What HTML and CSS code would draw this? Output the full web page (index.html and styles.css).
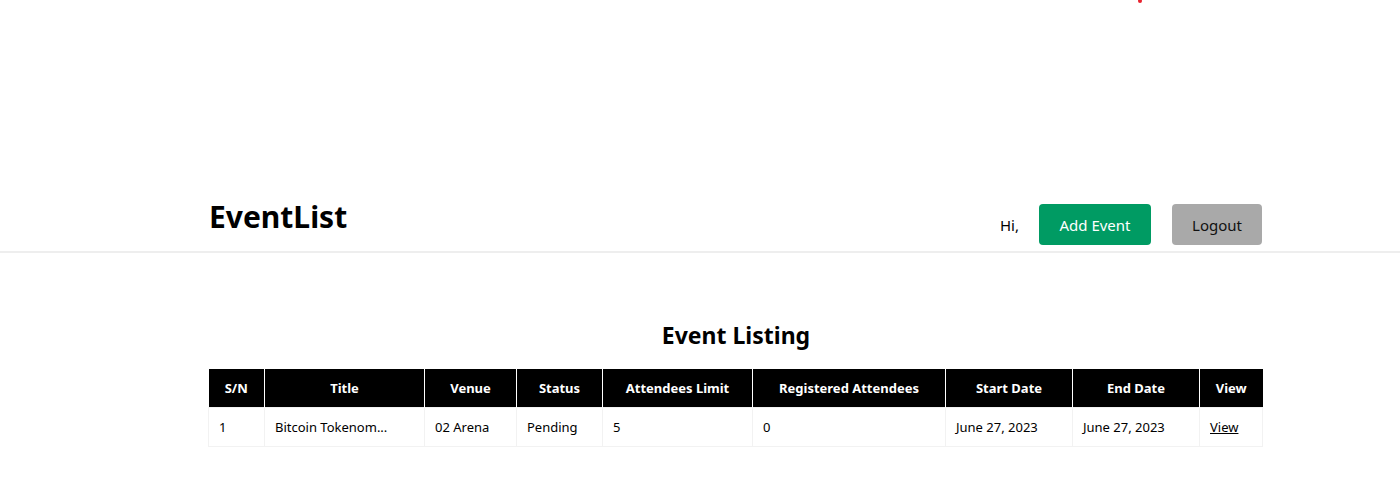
FILE: index.html
```html
<!DOCTYPE html>
<html>
<head>
<meta charset="utf-8">
<link rel="stylesheet" href="styles.css">
</head>
<body>
<span class="dot"></span>
<header class="topbar">
  <div class="container bar">
    <h1 class="brand">EventList</h1>
    <div class="actions">
      <span class="hi">Hi,</span>
      <button class="btn btn-add">Add Event</button>
      <button class="btn btn-logout">Logout</button>
    </div>
  </div>
</header>
<main class="container">
  <h2 class="title">Event Listing</h2>
  <table class="events">
    <colgroup>
      <col style="width:56px"><col style="width:160px"><col style="width:92px"><col style="width:86px"><col style="width:150px"><col style="width:193px"><col style="width:127px"><col style="width:127px"><col style="width:63px">
    </colgroup>
    <thead>
      <tr><th>S/N</th><th>Title</th><th>Venue</th><th>Status</th><th>Attendees Limit</th><th>Registered Attendees</th><th>Start Date</th><th>End Date</th><th>View</th></tr>
    </thead>
    <tbody>
      <tr><td>1</td><td>Bitcoin Tokenom...</td><td>02 Arena</td><td>Pending</td><td>5</td><td>0</td><td>June 27, 2023</td><td>June 27, 2023</td><td><a href="#">View</a></td></tr>
    </tbody>
  </table>
</main>
</body>
</html>
```
FILE: styles.css
```css
* { box-sizing: border-box; }
body {
  margin: 0;
  font-family: "Noto Sans", "Open Sans", sans-serif;
  color: #000;
  background: #fff;
  position: relative;
}
.dot {
  position: absolute;
  left: 1138px;
  top: -1px;
  width: 4px;
  height: 4px;
  border-radius: 50%;
  background: #e8232f;
}
.container {
  width: 1054px;
  margin: 0 0 0 209px;
}
.topbar {
  padding-top: 195px;
  border-bottom: 2px solid #eeeeee;
}
.bar {
  display: flex;
  justify-content: space-between;
  align-items: flex-end;
  padding-bottom: 6px;
}
.brand {
  margin: 0 0 6px 0;
  font-size: 30px;
  font-weight: 700;
  line-height: 44px;
  align-self: flex-start;
}
.actions {
  display: flex;
  align-items: center;
  margin-right: 1px;
}
.hi {
  font-size: 15px;
  margin-right: 20px;
}
.btn {
  font-family: inherit;
  font-size: 15px;
  border: none;
  border-radius: 4px;
  height: 41px;
  cursor: pointer;
}
.btn-add {
  background: #009b63;
  color: #fff;
  width: 112px;
  margin-right: 21px;
}
.btn-logout {
  background: #a9a9a9;
  color: #111;
  width: 90px;
}
.title {
  text-align: center;
  font-size: 23px;
  font-weight: 700;
  margin: 66px 0 18px;
  line-height: 32px;
}
.events {
  width: 1054px;
  margin-left: -1px;
  border-collapse: collapse;
  table-layout: fixed;
  font-size: 13px;
}
.events th {
  background: #000;
  color: #fff;
  font-weight: 700;
  height: 38px;
  text-align: center;
  border-left: 1px solid #fff;
  padding: 0 4px;
}
.events th:first-child { border-left: none; }
.events td {
  height: 39px;
  padding: 0 10px;
  border: 1px solid #f2f2f2;
  white-space: nowrap;
  overflow: hidden;
}
.events a { color: #000; }
```
